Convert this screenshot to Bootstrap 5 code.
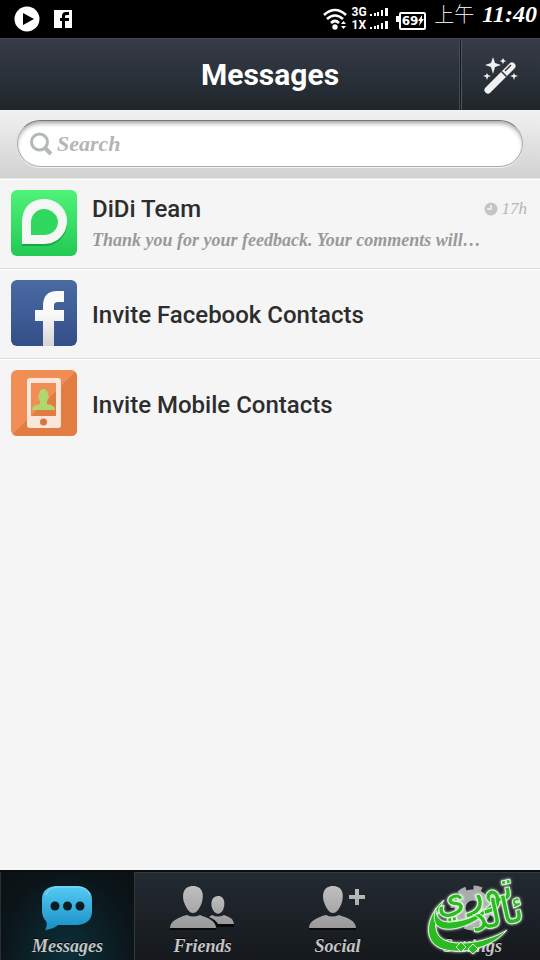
<!DOCTYPE html>
<html lang="en">
<head>
<meta charset="utf-8">
<meta name="viewport" content="width=device-width, initial-scale=1">
<title>Messages</title>
<link href="https://cdn.jsdelivr.net/npm/bootstrap@5.3.0/dist/css/bootstrap.min.css" rel="stylesheet">
<style>
body{background:#f5f5f5;font-family:Roboto,"Noto Sans CJK SC",sans-serif;color:#2d2d2d}
svg{display:block;flex:none}
.serif{font-family:"Liberation Serif","Noto Sans CJK SC",serif;font-style:italic}
.status{height:38px;background:#000;color:#fff;padding:0 3px 0 14px}
.fbmark{margin-left:14px}
.net{font:700 12px/13px Roboto,sans-serif}
.net div{gap:3px}
.clock{font-size:24px;line-height:28px}
.clock span{font:300 20px/28px "Noto Sans CJK SC",sans-serif;color:#ddd}
.battery{font:700 12px/14px "DejaVu Sans",sans-serif;border:2px solid #fff;border-radius:2px;height:18px;padding-left:1px}
.topbar{height:72px;background:linear-gradient(#373c48,#1f262b);color:#fff;border-top:1px solid #41444d}
.topbar h1{font-size:30px;line-height:36px}
.side{width:80px}
.wand{border-left:1px solid #14181c;box-shadow:inset 1px 0 #50555d,-1px 0 #454a53}
.searchbar{height:69px;padding:10px 17px 12px;background:linear-gradient(#f1f1f1,#d1d1d1);border-bottom:1px solid #e8e8e8}
.searchbox{height:47px;background:#fff;border:1px solid #aaa;border-top-color:#777;border-radius:24px;box-shadow:inset 0 4px 5px -2px #999,0 1px #f5f5f5;padding:0 12px}
.searchbox input{font-size:22px;line-height:28px;color:#888}
.searchbox input::placeholder{color:#b5b5b5;opacity:1}
.entry{height:90px;padding:0 13px 2px 11px;gap:15px;background:#f5f5f5;border:0;border-bottom:1px solid #dcdcdc;box-shadow:inset 0 1px #fff;color:#2d2d2d}
.entry:last-child{border-bottom-color:#f5f5f5}
.entry h2{font-size:24px;line-height:30px;font-weight:500}
.entry>h2{padding-top:4px}
.preview{font-size:18px;line-height:24px;color:#999}
.when{font-size:17px;line-height:24px;color:#b5b5b5}
.tabs{height:90px;background:linear-gradient(#232a31,#15191d);border-top:2px solid #0d1013}
.tab{color:#c4c4c4;font-size:18px;line-height:22px;padding:10px 0 3px;text-shadow:0 -1px #000;box-shadow:inset 0 1px #343b42}
.tab.current{background:radial-gradient(ellipse at 50% 100%,#0b303b,#0b1519 70%,#0c1012);box-shadow:inset 1px 0 #263036,inset -1px 0 #30383e}
.stamp{right:2px;bottom:2px;width:112px;height:86px;pointer-events:none}
.stamp text{font-family:"DejaVu Sans",sans-serif;fill:#2abb20;stroke:#dff8d9;stroke-width:2px;paint-order:stroke}
</style>
<script src="https://cdn.jsdelivr.net/npm/bootstrap@5.3.0/dist/js/bootstrap.bundle.min.js"></script>
</head>
<body>
<div class="d-flex flex-column min-vh-100 position-relative">
<div class="status d-flex align-items-center">
<svg width="26" height="26" viewBox="0 0 26 26"><circle cx="13" cy="13" r="12.5" fill="#fff"/><path d="M9 7l11 6-11 6z"/></svg>
<svg class="fbmark" width="18" height="18" viewBox="0 0 18 18"><path fill="#fff" d="M0 0h18v18H0z"/><path d="M8 18v-7H6V8h2V6q0-4 4-4h3v3h-2q-2 0-2 1v2h4v3h-4v7z"/></svg>
<svg class="ms-auto" width="25" height="22" viewBox="0 0 25 22"><g fill="none" stroke="#fff" stroke-width="2.6"><path d="M1 7q11-10 22 0M4 11q8-7 16 0M8 15q4-4 8 0"/></g><circle cx="12" cy="19" r="2.7" fill="#fff"/><path d="M18 16l2.500-3 2.500 3zM18 18h5l-2.500 3z" fill="#fff"/></svg>
<div class="net ms-1">
<div class="d-flex align-items-center justify-content-between">3G<svg width="18" height="9" viewBox="0 0 18 9"><path fill="#fff" d="M0 6h2v2H0zM4 5h2v3H4zM7 4h2v4H7zM11 2h2v6h-2zM15 0h3v8h-3z"/></svg></div>
<div class="d-flex align-items-center justify-content-between">1X<svg width="18" height="9" viewBox="0 0 18 9"><path fill="#fff" d="M0 6h2v2H0zM4 5h2v3H4zM7 4h2v4H7zM11 2h2v6h-2zM15 0h3v8h-3z"/></svg></div>
</div>
<svg class="ms-2" width="3" height="8" viewBox="0 0 3 8"><path fill="#fff" d="M0 1h3v6H0z"/></svg>
<div class="battery d-flex mt-1">69<svg width="6" height="14" viewBox="0 0 6 14"><path fill="#fff" d="M4 1L0 7h2l-1 5 5-7H4z"/></svg></div>
<div class="clock serif fw-bold d-flex align-self-start gap-2 ms-2"><span>上午</span>11:40</div>
</div>

<header class="topbar d-flex">
<div class="side"></div>
<h1 class="flex-fill m-0 fw-bold text-center align-self-center">Messages</h1>
<button class="side wand btn rounded-0 p-0 border-end-0 border-top-0 border-bottom-0 d-flex align-items-center justify-content-center" aria-label="Magic wand">
<svg width="36" height="38" viewBox="0 0 36 38"><path d="M5 34L29 10" stroke="#f1f1f1" stroke-width="7" stroke-linecap="round"/><path d="M18.500 15.500l5 5" stroke="#2c323a" stroke-width="1.500"/><path d="M22 15l6-6" stroke="#2c323a" stroke-width="1.500"/><path fill="#f1f1f1" d="M10 1l2 6 6 2-6 2-2 7-2-7-6-2 6-2zM20 2l1 2 2 1-2 1-1 2-1-2-2-1 2-1zM4 17l1 2 3 1-3 1-1 3-1-3-3-1 3-1zM31 17l1 2 3 1-3 1-1 3-1-3-3-1 3-1z"/></svg>
</button>
</header>

<div class="searchbar">
<div class="searchbox d-flex align-items-center">
<label for="search" aria-label="Search"><svg width="23" height="24" viewBox="0 0 23 24"><circle cx="9.500" cy="10" r="8" fill="none" stroke="#b3b8b8" stroke-width="3"/><path d="M15 16l6 6" stroke="#b3b8b8" stroke-width="4"/></svg></label>
<input id="search" type="text" class="serif fw-bold border-0 bg-transparent p-0 ms-1 flex-fill" placeholder="Search">
</div>
</div>

<main class="flex-fill list-group list-group-flush rounded-0">
<a href="#team" class="entry d-flex align-items-center text-decoration-none">
<svg width="66" height="66" viewBox="0 0 66 66"><defs><linearGradient id="green" x2="0" y2="1"><stop stop-color="#4ff378"/><stop offset="1" stop-color="#22c953"/></linearGradient></defs><rect width="66" height="66" rx="6" fill="url(#green)"/><path d="M11 56V33a22.500 22.500 0 1 1 22 23z" fill="#18a843"/><path fill="#f5f7f5" d="M11 54V32C11 18 20 9 33 9s23 10 23 22-9 23-23 23z"/><path fill="#2fd85f" d="M20 45V32c0-7 6-13 13-13s14 6 14 13-6 13-14 13z"/></svg>
<div class="flex-fill">
<div class="d-flex align-items-center"><h2 class="m-0">DiDi Team</h2><svg class="ms-auto me-1" width="14" height="14" viewBox="0 0 14 14"><circle cx="7" cy="7" r="6.500" fill="#c4c4c4"/><path d="M7 3v4H3" fill="none" stroke="#f5f5f5" stroke-width="1.500"/></svg><span class="when serif">17h</span></div>
<div class="preview serif fw-bold mt-1">Thank you for your feedback. Your comments will…</div>
</div>
</a>
<a href="#facebook" class="entry d-flex align-items-center text-decoration-none">
<svg width="66" height="66" viewBox="0 0 66 66"><defs><linearGradient id="blue" x2="0" y2="1"><stop stop-color="#4a6aa4"/><stop offset="1" stop-color="#334f88"/></linearGradient><linearGradient id="white" x2="0" y2="1"><stop offset=".4" stop-color="#fafafa"/><stop offset="1" stop-color="#d5d5d5"/></linearGradient></defs><rect width="66" height="66" rx="6" fill="url(#blue)"/><path fill="url(#white)" d="M32 66V41h-8V30h8v-4c0-10 5-15 14-15h7v11h-5c-4 0-5 1-5 4v4h10v11H43v25z"/></svg>
<h2 class="m-0">Invite Facebook Contacts</h2>
</a>
<a href="#mobile" class="entry d-flex align-items-center text-decoration-none">
<svg width="66" height="66" viewBox="0 0 66 66"><rect width="66" height="66" rx="6" fill="#f18e55"/><path d="M64 2q2 2 2 4v54q0 6-6 6H6q-2 0-4-2z" fill="#e17d42"/><rect x="16" y="8" width="34" height="50" rx="3" fill="#fbe6da"/><path fill="#f18e55" d="M20 13h25v33H20z"/><path d="M45 21v25H20z" fill="#e17d42"/><circle cx="32.500" cy="52" r="3.500" fill="#d9743f"/><path fill="#b0d76b" d="M28 25c0-8 9-8 9 0 1 0 1 3 0 4l-1 3v2c5 1 8 2 8 6H21c0-4 4-5 8-6v-2l-1-3c-1-1-1-4 0-4z"/></svg>
<h2 class="m-0">Invite Mobile Contacts</h2>
</a>
</main>

<nav class="tabs row g-0" aria-label="Main">
<a href="#messages" class="tab current serif fw-bold col-3 d-flex flex-column align-items-center justify-content-between text-decoration-none">
<svg width="56" height="50" viewBox="0 0 56 50"><defs><linearGradient id="sky" x2="0" y2="1"><stop stop-color="#55cbf3"/><stop offset="1" stop-color="#188fc5"/></linearGradient></defs><path fill="url(#sky)" d="M17 4h20c9 0 15 6 15 13v13c0 8-7 13-15 13H18q-4 4-13 5 3-5 1-9-4-4-4-10V17C2 9 8 4 17 4z"/><path d="M6 13Q9 5 17 5h20q10 0 13 8" fill="none" stroke="#83ddf7"/><g fill="#0b1b24"><circle cx="15" cy="24" r="4.500"/><circle cx="27.500" cy="24" r="4.500"/><circle cx="40" cy="24" r="4.500"/></g></svg>Messages</a>
<a href="#friends" class="tab serif fw-bold col-3 d-flex flex-column align-items-center justify-content-between text-decoration-none">
<svg width="66" height="50" viewBox="0 0 66 50"><defs><linearGradient id="grey" x2="0" y2="1"><stop stop-color="#bfbfbf"/><stop offset="1" stop-color="#999"/></linearGradient></defs><path fill="#07090b" d="M42 38h22v7H42zM0 44h46v4H0z"/><g fill="url(#grey)"><path d="M48 14c8 0 7 10 5 14-3 5-7 5-10 0-3-5-2-14 5-14zM42 33q6 3 12 0 10 3 10 9H48q-3-5-9-7z"/><path d="M23 4c10 0 11 9 9 16-2 6-5 11-9 11s-7-5-9-11C12 13 13 4 23 4zM17 33q6 3 13 0c8 3 16 6 16 13H0c0-7 9-11 17-13z"/></g></svg>Friends</a>
<a href="#social" class="tab serif fw-bold col-3 d-flex flex-column align-items-center justify-content-between text-decoration-none">
<svg width="58" height="50" viewBox="0 0 58 50"><path fill="#07090b" d="M0 44h47v4H0z"/><g fill="url(#grey)"><path d="M24 4c10 0 11 9 9 16-2 6-5 11-9 11s-7-5-9-11C13 13 14 4 24 4zM17 33q6 3 13 0c9 3 17 6 17 13H0c0-7 9-11 17-13zM46 7h4v6h6v4h-6v6h-4v-6h-6v-4h6z"/></g></svg>Social</a>
<a href="#settings" class="tab serif fw-bold col-3 d-flex flex-column align-items-center justify-content-between text-decoration-none">
<svg width="50" height="50" viewBox="0 0 50 50"><circle cx="25" cy="26" r="13" fill="none" stroke="#aaa" stroke-width="11"/><circle cx="25" cy="26" r="19.500" fill="none" stroke="#aaa" stroke-width="6" stroke-dasharray="8 7.300"/></svg>Settings</a>
</nav>
<svg class="stamp position-absolute" viewBox="0 0 112 86" role="img" aria-label="ئالدي توري"><defs><filter id="halo"><feDropShadow dx="0" dy="0" stdDeviation="1.500" flood-color="#fff"/></filter></defs><g filter="url(#halo)"><g fill="#2abb20" stroke="#dff8d9"><path d="M18 28C2 42-2 62 8 72c12 12 52 10 73-14-22 14-58 18-68 6-6-8-4-22 5-36z"/><path d="M10 36C4 54 14 60 32 56c16-4 32-15 40-31C58 40 46 47 32 49 16 52 10 48 10 36z"/><path d="M30 75l5-5 5 5-5 5zM42 77l5-5 5 5-5 5z"/></g><g text-anchor="middle"><text x="50" y="34" font-size="38" transform="rotate(-12 50 34)">توري</text><text x="73" y="54" font-size="38" transform="rotate(-12 73 54)">ئالد</text></g></g></svg>
</div>
</body>
</html>
